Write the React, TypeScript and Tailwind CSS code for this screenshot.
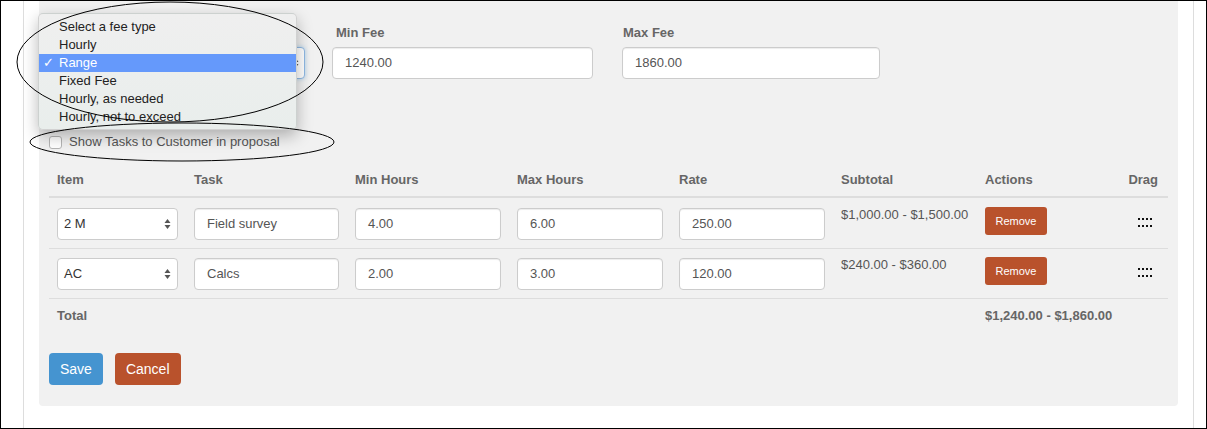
import React from "react";

function SelectArrows({ color = "#444" }: { color?: string }) {
  return (
    <svg width="7" height="12" viewBox="0 0 7 12" className="shrink-0">
      <polygon points="0.5,5 3.5,1 6.5,5" fill={color} />
      <polygon points="0.5,7 3.5,11 6.5,7" fill={color} />
    </svg>
  );
}

function DragIcon() {
  return (
    <svg width="14" height="9" viewBox="0 0 14 9">
      {[0, 4, 8, 12].map((x) => (
        <React.Fragment key={x}>
          <rect x={x} y={0} width={2} height={2} fill="#111" />
          <rect x={x} y={7} width={2} height={2} fill="#111" />
        </React.Fragment>
      ))}
    </svg>
  );
}

function TextInput({ value }: { value: string }) {
  return (
    <div className="h-[32px] w-full rounded-[4px] border border-[#cccccc] bg-white px-[12px] flex items-center text-[13px] text-[#555555] shadow-[inset_0_1px_1px_rgba(0,0,0,0.075)]">
      {value}
    </div>
  );
}

function ItemSelect({ value }: { value: string }) {
  return (
    <div className="h-[32px] w-full rounded-[4px] border border-[#cccccc] bg-white pl-[6px] pr-[6px] flex items-center justify-between text-[13px] text-[#333333]">
      <span>{value}</span>
      <SelectArrows color="#555" />
    </div>
  );
}

const rows = [
  { item: "2 M", task: "Field survey", min: "4.00", max: "6.00", rate: "250.00", sub: "$1,000.00 - $1,500.00" },
  { item: "AC", task: "Calcs", min: "2.00", max: "3.00", rate: "120.00", sub: "$240.00 - $360.00" },
];

const cols = "grid grid-cols-[137px_161px_162px_162px_162px_144px_143px_47px]";

export default function App() {
  const options = [
    "Select a fee type",
    "Hourly",
    "Range",
    "Fixed Fee",
    "Hourly, as needed",
    "Hourly, not to exceed",
  ];
  return (
    <div className="relative w-[1207px] h-[429px] overflow-hidden bg-white font-['Liberation_Sans',Arial,Helvetica,sans-serif] text-[13px] leading-[18px] text-[#555555]">
      <div className="w-[1207px] h-[429px] border border-black bg-white flex">
        <div className="ml-[22px] mr-[12px] flex-1 border-x border-[#dddddd] px-[15px]">
          <div className="bg-[#f1f1f1] rounded-b-[4px] px-[10px] pt-[23px] pb-[21px]">
            {/* top fee row */}
            <div className="flex">
              <div className="w-[256px]">
                <div className="h-[18px] mb-[5px]" />
                <div className="h-[32px] rounded-[4px] border border-[#8fb8e3] bg-white flex items-center justify-end pr-[5px] shadow-[0_0_4px_rgba(102,175,233,0.5)]">
                  <SelectArrows color="#555" />
                </div>
              </div>
              <div className="w-[261px] ml-[27px]">
                <div className="h-[18px] mb-[5px] pl-[4px] font-bold text-[#666666]">Min Fee</div>
                <TextInput value="1240.00" />
              </div>
              <div className="w-[258px] ml-[29px]">
                <div className="h-[18px] mb-[5px] pl-[1px] font-bold text-[#666666]">Max Fee</div>
                <TextInput value="1860.00" />
              </div>
            </div>

            {/* checkbox */}
            <div className="mt-[54px] h-[18px] flex items-center">
              <div className="w-[13px] h-[13px] rounded-[3px] border border-[#b5b5b5] bg-white" />
              <span className="ml-[7px] text-[#555555]">Show Tasks to Customer in proposal</span>
            </div>

            {/* table */}
            <div className="mt-[12px]">
              <div className={`${cols} border-b-2 border-[#dddddd] pt-[8px] pb-[7px] font-bold text-[#666666]`}>
                <div className="px-[8px]">Item</div>
                <div className="px-[8px]">Task</div>
                <div className="px-[8px]">Min Hours</div>
                <div className="px-[8px]">Max Hours</div>
                <div className="px-[8px]">Rate</div>
                <div className="px-[8px]">Subtotal</div>
                <div className="px-[8px]">Actions</div>
                <div className="pr-[9px] text-right">Drag</div>
              </div>
              {rows.map((r, i) => (
                <div
                  key={r.task}
                  className={`${cols} border-b border-[#dddddd] ${i === 0 ? "pt-[10px]" : "pt-[9px]"} pb-[8px]`}
                >
                  <div className="px-[8px]"><ItemSelect value={r.item} /></div>
                  <div className="px-[8px]"><TextInput value={r.task} /></div>
                  <div className="px-[8px]"><TextInput value={r.min} /></div>
                  <div className="px-[8px]"><TextInput value={r.max} /></div>
                  <div className="px-[8px]"><TextInput value={r.rate} /></div>
                  <div className="px-[8px] -mt-[2px] text-[#555555]">{r.sub}</div>
                  <div className="px-[8px] -mt-[1px]">
                    <div className="w-[62px] h-[28px] rounded-[3px] bg-[#b9522c] text-white text-[11px] flex items-center justify-center">
                      Remove
                    </div>
                  </div>
                  <div className="flex justify-center pt-[10px] pl-[2px]">
                    <div className="h-[9px]"><DragIcon /></div>
                  </div>
                </div>
              ))}
              <div className={`${cols} py-[8px] font-bold text-[#666666]`}>
                <div className="px-[8px]">Total</div>
                <div />
                <div />
                <div />
                <div />
                <div />
                <div className="px-[8px] col-span-2 whitespace-nowrap">$1,240.00 - $1,860.00</div>
              </div>
            </div>

            {/* buttons */}
            <div className="mt-[20px] flex gap-[12px]">
              <div className="h-[32px] px-[11px] rounded-[4px] bg-[#4594d0] text-white text-[14px] flex items-center">Save</div>
              <div className="h-[32px] px-[11px] rounded-[4px] bg-[#b9522c] text-white text-[14px] flex items-center">Cancel</div>
            </div>
          </div>
        </div>
      </div>

      {/* native select popup */}
      <div className="absolute left-[38px] top-[13px] w-[259px] h-[117px] z-10 rounded-[5px] border border-[rgba(0,0,0,0.12)] bg-gradient-to-b from-[#efefef] to-[#e9eeec] shadow-[0_6px_16px_rgba(0,0,0,0.28)] pt-[4px]">
        {options.map((o) => {
          const sel = o === "Range";
          return (
            <div
              key={o}
              className={`relative h-[18px] flex items-center pl-[20px] text-[13px] ${sel ? "bg-[#6599fb] text-white" : "text-[#222222]"}`}
            >
              {sel && (
                <span className="absolute left-[4px] top-0 h-[18px] flex items-center text-[13px] font-['DejaVu_Sans',sans-serif]">✓</span>
              )}
              {o}
            </div>
          );
        })}
      </div>

      {/* annotation ellipses */}
      <svg className="absolute left-0 top-0 z-20 pointer-events-none" width="1207" height="429" viewBox="0 0 1207 429">
        <ellipse cx="170" cy="62" rx="153" ry="60" fill="none" stroke="#000" strokeWidth="1" />
        <ellipse cx="182" cy="142" rx="152" ry="19" fill="none" stroke="#000" strokeWidth="1" />
      </svg>
    </div>
  );
}
